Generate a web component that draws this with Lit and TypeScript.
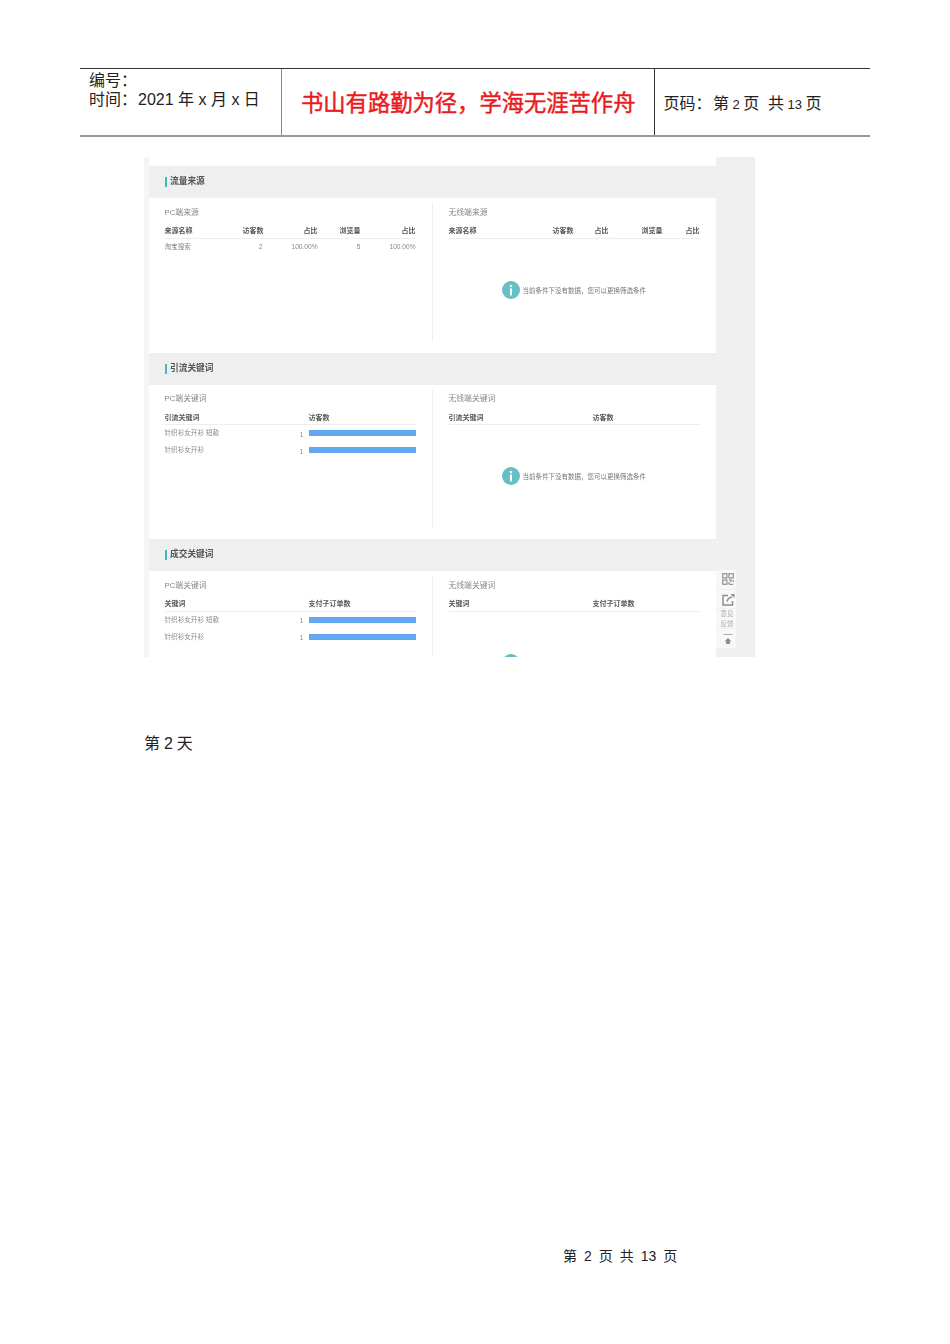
import { LitElement, html, css, svg } from "lit";
import { customElement } from "lit/decorators.js";

const infoIcon = svg`<svg class="info" viewBox="0 0 18 18" width="18" height="18"><circle cx="9" cy="9" r="9" fill="#65bfc4"/><circle cx="9" cy="5" r="1.3" fill="#fff"/><rect x="8" y="7.4" width="2" height="7" fill="#fff"/></svg>`;
const emptyText = "当前条件下没有数据，您可以更换筛选条件";

@customElement("app-root")
export class AppRoot extends LitElement {
  static styles = css`
    :host {
      display: block;
      width: 950px;
      height: 1344px;
      background: #fff;
      color: #222;
      font-family: "Liberation Sans", "Noto Sans CJK SC", sans-serif;
      overflow: hidden;
    }
    .page { display: flex; flex-direction: column; padding: 68px 80px 0; box-sizing: border-box; height: 1344px; }

    .head {
      display: grid;
      grid-template-columns: 202px 373px 215px;
      height: 69px;
      box-sizing: border-box;
      border-top: 1px solid #333;
      border-bottom: 2px solid #999;
      font-size: 16px;
      line-height: 19px;
    }
    .h1 { padding: 2px 0 0 9px; border-right: 1.5px solid #888; white-space: nowrap; }
    .yr { margin-left: 1px; }
    .h2 {
      color: #ea1a22;
      font-size: 22.3px;
      font-weight: 400;
      -webkit-text-stroke: 0.45px #ea1a22;
      line-height: 26px;
      padding: 22px 0 0 19px;
      white-space: nowrap;
      border-right: 1px solid #333;
    }
    .h3 { padding: 25px 0 0 8.5px; white-space: nowrap; word-spacing: -1px; }
    .num { font-size: 13px; }
    .sp { margin-left: 1.5px; }
    .gap { margin-left: 2px; }

    .shot {
      display: flex;
      width: 611px;
      height: 500px;
      margin: 20px 0 0 64px;
      overflow: hidden;
      position: relative;
      filter: blur(0.4px);
    }
    .strip { width: 4.5px; background: #f5f5f5; flex: none; }
    .main { width: 567.5px; flex: none; padding-top: 9px; box-sizing: border-box; background: #fff; }
    .side { flex: 1; background: #f0f0f0; }

    .sec { height: 186.5px; }
    .sec-head {
      height: 32px;
      box-sizing: border-box;
      background: #efefef;
      display: flex;
      align-items: center;
      padding-left: 16px;
      gap: 3px;
      font-size: 8.7px;
      font-weight: 700;
      color: #555;
    }
    .sec-head i { width: 2.5px; height: 10px; background: #3fb8c0; display: block; }
    .sec-head span { position: relative; top: -1.5px; }
    .sec-body { display: grid; grid-template-columns: 284px 283.5px; padding-top: 5px; }
    .panel { height: 138px; padding: 3.5px 16px 0; box-sizing: border-box; }
    .panel.left { border-right: 1px solid #eee; }
    .ptitle { font-size: 7.8px; line-height: 11px; color: #888; margin-bottom: 7.5px; }

    .tbl { display: grid; font-size: 6.6px; color: #888; }
    .t-src-l { grid-template-columns: 78px 20px 55px 43px 55px; width: 251px; }
    .t-src-r { grid-template-columns: 104px 21px 35px 54px 37px; width: 251px; }
    .th {
      font-size: 7px;
      font-weight: 700;
      color: #555;
      height: 12.5px;
      line-height: 11px;
      border-bottom: 1px solid #eee;
      white-space: nowrap;
    }
    .td { height: 17px; line-height: 15.5px; white-space: nowrap; }
    .r { text-align: right; }

    .t-kw { grid-template-columns: 144px 107px; width: 251px; }
    .cnt { display: flex; align-items: center; gap: 5px; height: 17px; margin-left: -30px; justify-content: flex-end; }
    .cnt span { line-height: 17px; position: relative; top: 0.5px; }
    .bar { width: 107px; height: 6px; background: #62a8f0; flex: none; margin-top: -1px; }

    .empty {
      display: flex;
      align-items: center;
      gap: 3px;
      font-size: 6.5px;
      color: #777;
      white-space: nowrap;
      padding-left: 53px;
      margin-top: 42px;
    }
    .info { flex: none; }

    .tools {
      position: absolute;
      left: 572px;
      top: 413px;
      width: 20px;
      height: 79px;
      background: #f8f8f8;
      display: flex;
      flex-direction: column;
      align-items: center;
      color: #aaa;
    }
    .tool { height: 20px; width: 20px; padding-left: 4px; display: flex; align-items: center; justify-content: center; border-bottom: 1px solid #f0f0f0; box-sizing: border-box; }
    .fb { font-size: 6.5px; line-height: 10px; height: 20px; width: 20px; padding-left: 2px; text-align: center; border-bottom: 1px solid #f0f0f0; box-sizing: border-box; color: #aaa; }

    .day { margin: 77px 0 0 64px; font-size: 16px; line-height: 20px; color: #222; word-spacing: -0.5px; }
    .foot {
      margin: 493px 0 0 483px;
      font-size: 14px;
      line-height: 18px;
      white-space: pre;
      word-spacing: -0.4px;
      color: #222;
    }
  `;

  private srcPanel(title: string, side: "left" | "right") {
    return html`<div class="panel ${side}">
      <div class="ptitle">${title}</div>
      ${side === "left"
        ? html`<div class="tbl t-src-l">
            <div class="th">来源名称</div><div class="th r">访客数</div><div class="th r">占比</div><div class="th r">浏览量</div><div class="th r">占比</div>
            <div class="td">淘宝搜索</div><div class="td r">2</div><div class="td r">100.00%</div><div class="td r">5</div><div class="td r">100.00%</div>
          </div>`
        : html`<div class="tbl t-src-r">
            <div class="th">来源名称</div><div class="th r">访客数</div><div class="th r">占比</div><div class="th r">浏览量</div><div class="th r">占比</div>
          </div>
          <div class="empty">${infoIcon}<span>${emptyText}</span></div>`}
    </div>`;
  }

  private kwPanel(title: string, a: string, b: string, rows: string[], side: "left" | "right", msg = true) {
    return html`<div class="panel ${side}">
      <div class="ptitle">${title}</div>
      <div class="tbl t-kw">
        <div class="th">${a}</div><div class="th">${b}</div>
        ${rows.map(
          (r) => html`<div class="td">${r}</div><div class="cnt"><span>1</span><div class="bar"></div></div>`
        )}
      </div>
      ${side === "right" ? html`<div class="empty">${infoIcon}${msg ? html`<span>${emptyText}</span>` : ""}</div>` : ""}
    </div>`;
  }

  render() {
    const rows = ["针织衫女开衫 短款", "针织衫女开衫"];
    return html`<div class="page">
      <div class="head">
        <div class="h1">编号：<br />时间：<span class="yr">2021</span> 年 x 月 x 日</div>
        <div class="h2">书山有路勤为径，学海无涯苦作舟</div>
        <div class="h3">页码：<span class="sp">第</span> <span class="num">2</span> 页 &nbsp;<span class="gap">共</span> <span class="num">13</span> 页</div>
      </div>

      <div class="shot">
        <div class="strip"></div>
        <div class="main">
          <div class="sec">
            <div class="sec-head"><i></i><span>流量来源</span></div>
            <div class="sec-body">${this.srcPanel("PC端来源", "left")}${this.srcPanel("无线端来源", "right")}</div>
          </div>
          <div class="sec">
            <div class="sec-head"><i></i><span>引流关键词</span></div>
            <div class="sec-body">
              ${this.kwPanel("PC端关键词", "引流关键词", "访客数", rows, "left")}
              ${this.kwPanel("无线端关键词", "引流关键词", "访客数", [], "right")}
            </div>
          </div>
          <div class="sec">
            <div class="sec-head"><i></i><span>成交关键词</span></div>
            <div class="sec-body">
              ${this.kwPanel("PC端关键词", "关键词", "支付子订单数", rows, "left")}
              ${this.kwPanel("无线端关键词", "关键词", "支付子订单数", [], "right", false)}
            </div>
          </div>
        </div>
        <div class="side"></div>
        <div class="tools">
          <div class="tool">
            <svg width="12" height="12" viewBox="0 0 12 12" fill="none" stroke="#999" stroke-width="1.3">
              <rect x=".7" y=".7" width="4.200" height="4.200"/><rect x="7" y=".7" width="4.300" height="4.200"/><rect x=".7" y="7" width="4.200" height="4.300"/>
              <path d="M7 7h2v2M11.300 7v2M7 11.300h4.300M7 9v2.300"/>
            </svg>
          </div>
          <div class="tool">
            <svg width="13" height="13" viewBox="0 0 13 13" fill="none" stroke="#8c8c8c" stroke-width="1.400">
              <path d="M6 2.500H1v9.500h9.500V8"/><path d="M5 8.500C5.500 6 7.500 4.500 10 4"/><path d="M8.500 1h4v4z" fill="#8c8c8c" stroke="none"/>
            </svg>
          </div>
          <div class="fb">意见<br />反馈</div>
          <div class="tool">
            <svg width="10" height="12" viewBox="0 0 10 12" fill="#8a8a8a">
              <rect x="0.500" y="1" width="9" height="0.800" fill="#999"/>
              <path d="M5 5 8.500 8.500H6.800V11H3.200V8.500H1.500z"/>
            </svg>
          </div>
        </div>
      </div>

      <div class="day">第 2 天</div>
      <div class="foot">第  2  页  共  13  页</div>
    </div>`;
  }
}
